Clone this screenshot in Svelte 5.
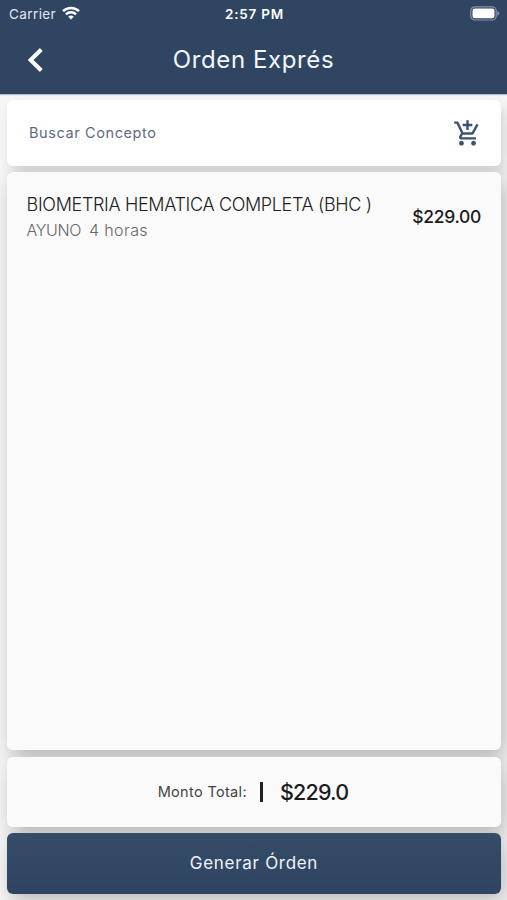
<script>
  const items = [
    { name: 'BIOMETRIA HEMATICA COMPLETA (BHC )', tag: 'AYUNO', hours: '4 horas', price: '$229.00' },
  ];
  const total = '$229.0';
</script>

<div class="screen">
  <header>
    <div class="status">
      <div class="carrier">
        <span>Carrier</span>
        <svg width="18" height="14" viewBox="0 0 18 14" fill="none" stroke="#fff" stroke-width="2.4">
          <path d="M1 5.2C5.4.9 12.6.9 17 5.2" />
          <path d="M3.9 8.3C6.7 5.6 11.3 5.6 14.1 8.3" />
          <path d="M6.2 10.7C7.8 9.2 10.2 9.2 11.8 10.7L9 13.5Z" fill="#fff" stroke="none" />
        </svg>
      </div>
      <span class="time">2:57 PM</span>
      <svg class="battery" width="30" height="15" viewBox="0 0 30 15">
        <rect x=".8" y=".8" width="25.4" height="13.2" rx="4" fill="none" stroke="#8594aa" stroke-width="1.2" />
        <rect x="2.5" y="2.5" width="22" height="9.8" rx="2.2" fill="#fff" />
        <path d="M27.3 5v4.8c2.6-.9 2.6-3.9 0-4.8Z" fill="#8594aa" />
      </svg>
    </div>
    <div class="nav">
      <svg class="back" width="18" height="26" viewBox="0 0 18 26" fill="none" stroke="#fff" stroke-width="4">
        <path d="M14.300 2.500 3.600 13 14.300 23.500" />
      </svg>
      <h1>Orden Exprés</h1>
    </div>
  </header>

  <main>
    <section class="card search">
      <span class="hint">Buscar Concepto</span>
      <svg width="29" height="29" viewBox="0 0 24 24" fill="#3d5270">
        <path d="M11 9h2V6h3V4h-3V1h-2v3H8v2h3v3zm-4 9c-1.1 0-1.99.9-1.99 2S5.900 22 7 22s2-.9 2-2-.9-2-2-2zm10 0c-1.100 0-1.990.9-1.990 2s.89 2 1.990 2 2-.9 2-2-.9-2-2-2zm-9.830-3.250l.03-.12.9-1.630h7.450c.75 0 1.410-.41 1.750-1.030l3.860-7.010L19.420 4h-.01l-1.100 2-2.760 5H8.530l-.13-.27L6.160 6l-.95-2-.94-2H1v2h2l3.600 7.590-1.350 2.450c-.16.28-.25.61-.25.96 0 1.100.9 2 2 2h12v-2H7.420c-.13 0-.25-.11-.25-.25z" />
      </svg>
    </section>

    <section class="card list">
      {#each items as item}
        <div class="row">
          <div class="info">
            <span class="name">{item.name}</span>
            <span class="note"><span class="tag">{item.tag}</span><span class="hours">{item.hours}</span></span>
          </div>
          <span class="price">{item.price}</span>
        </div>
      {/each}
    </section>

    <section class="card total">
      <span class="label">Monto Total:</span>
      <i class="bar"></i>
      <span class="amount">{total}</span>
    </section>

    <button class="card" type="button"><span>Generar Órden</span></button>
  </main>
</div>

<style>
  .screen {
    box-sizing: border-box;
    width: 100%;
    height: 900px;
    display: flex;
    flex-direction: column;
    overflow: hidden;
    background: #f6f6f7;
    font-family: Inter, "Liberation Sans", sans-serif;
    white-space: nowrap;
  }
  header {
    height: 94px;
    flex: none;
    background: #2f4562;
    color: #fff;
    box-shadow: 0 1px 1px #b5bcc5;
    position: relative;
    z-index: 1;
  }
  .status {
    height: 28px;
    padding: 0 7px 0 9px;
    display: grid;
    grid-template-columns: 1fr auto 1fr;
    align-items: center;
  }
  .carrier { display: flex; align-items: center; gap: 6px; color: #e3e7ed; font-size: 13.5px; letter-spacing: .4px; }
  .carrier svg { margin-top: -2px; }
  .time { font-size: 13.5px; font-weight: 600; letter-spacing: .75px; }
  .battery { justify-self: end; margin-top: -1px; }
  .nav {
    height: 64px;
    display: grid;
    grid-template-columns: 1fr auto 1fr;
    align-items: center;
    padding: 0 27px;
  }
  h1 { margin: 0; font-size: 24px; font-weight: 400; letter-spacing: .6px; line-height: 32px; color: #f2f7fd; }
  main {
    flex: 1;
    min-height: 0;
    display: flex;
    flex-direction: column;
    gap: 6px;
    padding: 6px 6px 6px 7px;
    isolation: isolate;
  }
  .card {
    box-sizing: border-box;
    border-radius: 6px;
    background: #fafafa;
    position: relative;
  }
  /* Shadows are drawn behind all the panels, so none falls on a neighbour. */
  .card::after {
    content: "";
    position: absolute;
    inset: 0;
    z-index: -1;
    border-radius: 6px;
    box-shadow: 4px 7px 20px rgba(0, 0, 0, .25);
  }
  .search {
    height: 66px;
    flex: none;
    background: #fff;
    display: flex;
    align-items: center;
    justify-content: space-between;
    padding: 0 19px 0 22px;
  }
  .card.search::after { box-shadow: 4px 7px 14px rgba(0, 0, 0, .14); }
  .hint { font-size: 14.5px; letter-spacing: .6px; color: #5c6b84; margin-top: -2px; }
  .list { flex: 1; padding: 20px 20px 20px 19px; margin-bottom: 1px; }
  .row { display: flex; justify-content: space-between; align-items: center; }
  .info { display: flex; flex-direction: column; margin-left: .6px; }
  .name { font-size: 18px; font-weight: 300; line-height: 26px; color: #222; letter-spacing: -.34px; }
  .note { display: flex; gap: 8px; font-size: 16px; font-weight: 300; line-height: 25px; color: #666; }
  .tag { letter-spacing: -.4px; }
  .hours { letter-spacing: .4px; }
  .price { font-size: 17.5px; font-weight: 500; color: #1c1c1c; letter-spacing: -.3px; margin-top: -2px; }
  .total {
    height: 70px;
    flex: none;
    display: flex;
    align-items: center;
    justify-content: center;
    padding-right: 2px;
    color: #1c1c1c;
  }
  .label { font-size: 14.5px; letter-spacing: .33px; color: #444; margin-top: -1px; }
  .bar { width: 3px; height: 20px; margin: 0 17px 0 13px; background: #222; }
  .amount { font-size: 21.5px; font-weight: 500; letter-spacing: -.8px; }
  button.card {
    height: 61px;
    flex: none;
    border: 0;
    padding: 0 0 2px;
    background: linear-gradient(#354d69, #2e4361);
    color: #edf3fa;
    font: 400 17px Inter, "Liberation Sans", sans-serif;
    letter-spacing: .7px;
  }
</style>
